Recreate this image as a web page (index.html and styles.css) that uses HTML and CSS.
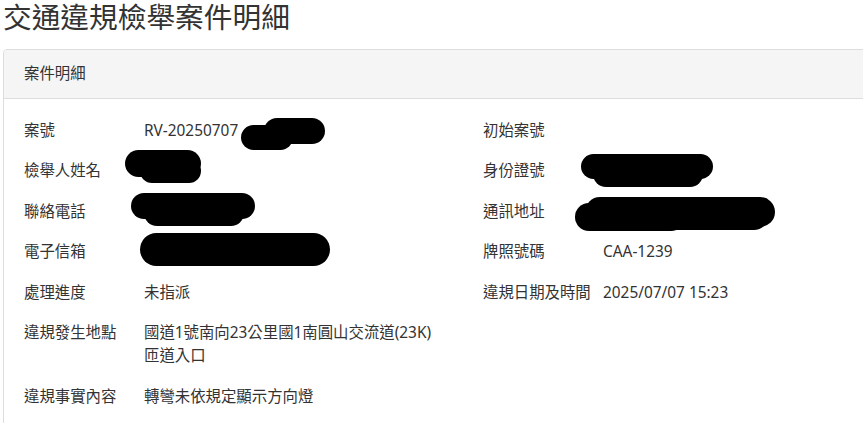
FILE: index.html
```html
<!DOCTYPE html>
<html lang="zh-Hant">
<head>
<meta charset="utf-8">
<title>交通違規檢舉案件明細</title>
<link rel="stylesheet" href="styles.css">
</head>
<body>
<h1 class="page-title">交通違規檢舉案件明細</h1>
<section class="panel">
  <div class="panel-heading">案件明細</div>
  <div class="panel-body">
    <div class="grid">
      <div class="field"><span class="label">案號</span><span class="value">RV-20250707<i class="blob b1a"></i><i class="blob b1b"></i></span></div>
      <div class="field"><span class="label">初始案號</span><span class="value"></span></div>

      <div class="field"><span class="label">檢舉人姓名</span><span class="value"><i class="blob b2a"></i><i class="blob b2b"></i></span></div>
      <div class="field"><span class="label">身份證號</span><span class="value"><i class="blob b5a"></i><i class="blob b5b"></i></span></div>

      <div class="field"><span class="label">聯絡電話</span><span class="value"><i class="blob b3a"></i><i class="blob b3b"></i></span></div>
      <div class="field"><span class="label">通訊地址</span><span class="value"><i class="blob b6a"></i><i class="blob b6b"></i><i class="blob b6c"></i></span></div>

      <div class="field"><span class="label">電子信箱</span><span class="value"><i class="blob b4a"></i></span></div>
      <div class="field"><span class="label">牌照號碼</span><span class="value">CAA-1239</span></div>

      <div class="field"><span class="label">處理進度</span><span class="value">未指派</span></div>
      <div class="field"><span class="label">違規日期及時間</span><span class="value">2025/07/07 15:23</span></div>

      <div class="field"><span class="label">違規發生地點</span><span class="value">國道1號南向23公里國1南圓山交流道(23K)匝道入口</span></div>
      <div class="field"></div>

      <div class="field"><span class="label">違規事實內容</span><span class="value">轉彎未依規定顯示方向燈</span></div>
      <div class="field"></div>
    </div>
  </div>
</section>
</body>
</html>
```

FILE: styles.css
```css
html, body {
  margin: 0;
  padding: 0;
  background: #ffffff;
}
body {
  padding: 0 0 0 3px;
  color: #333333;
  font-family: "Noto Sans", "Noto Sans CJK TC", sans-serif;
  overflow: hidden;
  height: 423px;
}
.page-title {
  margin: 0;
  font-size: 28.7px;
  font-weight: 400;
  line-height: 34px;
  color: #333333;
}
.panel {
  margin-top: 15px;
  border: 1px solid #dddddd;
  border-radius: 4px;
  width: 880px;
  height: 420px;
}
.panel-heading {
  background: #f5f5f5;
  border-bottom: 1px solid #dddddd;
  border-radius: 3px 3px 0 0;
  height: 48px;
  line-height: 48px;
  padding: 0 20px;
  font-size: 15.4px;
}
.panel-body {
  padding: 20px 20px 0 20px;
}
.grid {
  display: grid;
  grid-template-columns: 414px 414px;
  column-gap: 45px;
  row-gap: 17px;
  font-size: 15.4px;
  line-height: 23.4px;
}
.field {
  display: flex;
  min-height: 23px;
}
.label {
  flex: 0 0 120px;
  width: 120px;
}
.value {
  flex: 1 1 auto;
  position: relative;
}
.blob {
  position: absolute;
  display: block;
  background: #000000;
  border-radius: 16px;
}
.b1a { left: 97px; top: 6px; width: 52px; height: 25px; }
.b1b { left: 120px; top: -1px; width: 61px; height: 26px; }
.b2a { left: -19px; top: -9px; width: 76px; height: 27px; }
.b2b { left: -4px; top: 0px; width: 61px; height: 24px; }
.b3a { left: -13px; top: -7px; width: 124px; height: 26px; }
.b3b { left: 0px; top: 0px; width: 100px; height: 26px; }
.b4a { left: -4px; top: -7px; width: 190px; height: 33px; border-radius: 17px; }
.b5a { left: -22px; top: -5px; width: 132px; height: 25px; }
.b5b { left: -10px; top: 2px; width: 110px; height: 26px; }
.b6a { left: -28px; top: 3px; width: 110px; height: 28px; }
.b6b { left: -18px; top: -3px; width: 190px; height: 30px; }
.b6c { left: 60px; top: 2px; width: 105px; height: 28px; }
```
